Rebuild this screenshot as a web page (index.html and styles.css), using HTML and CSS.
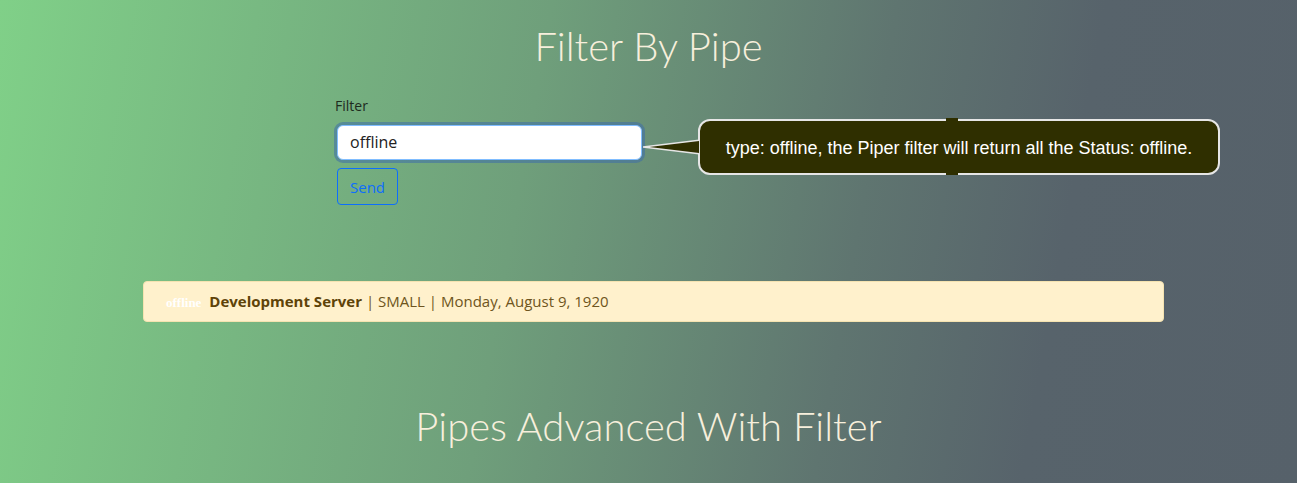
FILE: index.html
```html
<!DOCTYPE html>
<html>
<head>
<meta charset="utf-8">
<link rel="stylesheet" href="styles.css">
</head>
<body>
<div class="page">
  <h1 class="title">Filter By Pipe</h1>
  <div class="form">
    <label class="label">Filter</label>
    <div class="input-row">
      <div class="input">offline</div>
      <div class="tip">
        <svg class="tip-arrow" width="60" height="20" viewBox="0 0 60 20">
          <polygon points="0,10 58,3 58,17" fill="#2f2f00"/>
          <polyline points="58,3 0,10 58,17" fill="none" stroke="#e6e6e6" stroke-width="1.5"/>
        </svg>
        <div class="bubble">type: offline, the Piper filter will return all the Status: offline.<span class="notch"></span><span class="notch notch-b"></span></div>
      </div>
    </div>
    <button class="btn">Send</button>
  </div>
  <div class="alert"><span class="badge">offline</span> <strong>Development Server</strong> | SMALL | Monday, August 9, 1920</div>
  <h1 class="title title-2">Pipes Advanced With Filter</h1>
</div>
</body>
</html>
```
FILE: styles.css
```css
html, body {
  margin: 0;
  padding: 0;
  height: 100%;
}
body {
  background: linear-gradient(100deg, #80d088 0%, #6f9f7b 40%, #5f7570 65%, #57636b 80%, #56616a 100%);
  font-family: "Open Sans", "Noto Sans", sans-serif;
  overflow: hidden;
}
.page {
  display: flex;
  flex-direction: column;
  align-items: center;
  padding-top: 22px;
}
.title {
  margin: 0;
  font-family: Lato, sans-serif;
  font-weight: 300;
  font-size: 40px;
  line-height: 48px;
  color: #f7efdc;
  text-align: center;
}
.form {
  align-self: flex-start;
  margin-left: 335px;
  margin-top: 26px;
  display: flex;
  flex-direction: column;
  align-items: flex-start;
}
.label {
  font-size: 14px;
  line-height: 20px;
  color: #1e2a1e;
  margin-bottom: 0;
}
.input-row {
  position: relative;
  display: flex;
  align-items: flex-start;
}
.input {
  width: 279px;
  height: 33px;
  box-sizing: content-box;
  padding: 0 12px;
  background: #fff;
  border: 1px solid #80bdff;
  border-radius: 6px;
  box-shadow: 0 0 0 3px rgba(62, 110, 170, 0.55);
  font-size: 16px;
  line-height: 33px;
  color: #222;
  margin-top: 9px;
  margin-left: 2px;
}
.tip {
  position: absolute;
  left: 308px;
  top: 3px;
  display: flex;
  align-items: center;
}
.tip-arrow {
  display: block;
  margin-right: -3px;
  position: relative;
  z-index: 1;
  width: 58px;
}
.bubble {
  position: relative;
  background: #2f2f00;
  border: 2px solid #e6e6e6;
  border-radius: 12px;
  color: #fff;
  font-family: "Liberation Sans", Arial, sans-serif;
  font-size: 18px;
  width: 522px;
  height: 56px;
  box-sizing: border-box;
  display: flex;
  align-items: center;
  justify-content: center;
  padding-top: 2px;
  white-space: nowrap;
}
.notch {
  position: absolute;
  top: -3px;
  left: 246px;
  width: 12px;
  height: 3px;
  background: #2f2f00;
}
.notch-b {
  top: auto;
  bottom: -2px;
  height: 2px;
}
.btn {
  margin-top: 8px;
  margin-left: 2px;
  width: 61px;
  height: 37px;
  background: transparent;
  border: 1px solid #0d6efd;
  border-radius: 4px;
  color: #0d6efd;
  font-family: "Open Sans", "Noto Sans", sans-serif;
  font-size: 15px;
  padding: 0;
}
.alert {
  align-self: flex-start;
  margin-left: 143px;
  margin-top: 76px;
  width: 1021px;
  height: 41px;
  box-sizing: border-box;
  background: #fff1cc;
  border: 1px solid #f5e3b0;
  border-radius: 4px;
  color: #6e5520;
  font-size: 15px;
  line-height: 39px;
  padding-left: 22px;
  white-space: nowrap;
}
.badge {
  font-family: "Liberation Serif", serif;
  font-weight: bold;
  font-size: 13px;
  color: #fff;
  margin-right: 4px;
}
.alert strong {
  color: #5e4308;
}
.title-2 {
  margin-top: 80px;
}
```
